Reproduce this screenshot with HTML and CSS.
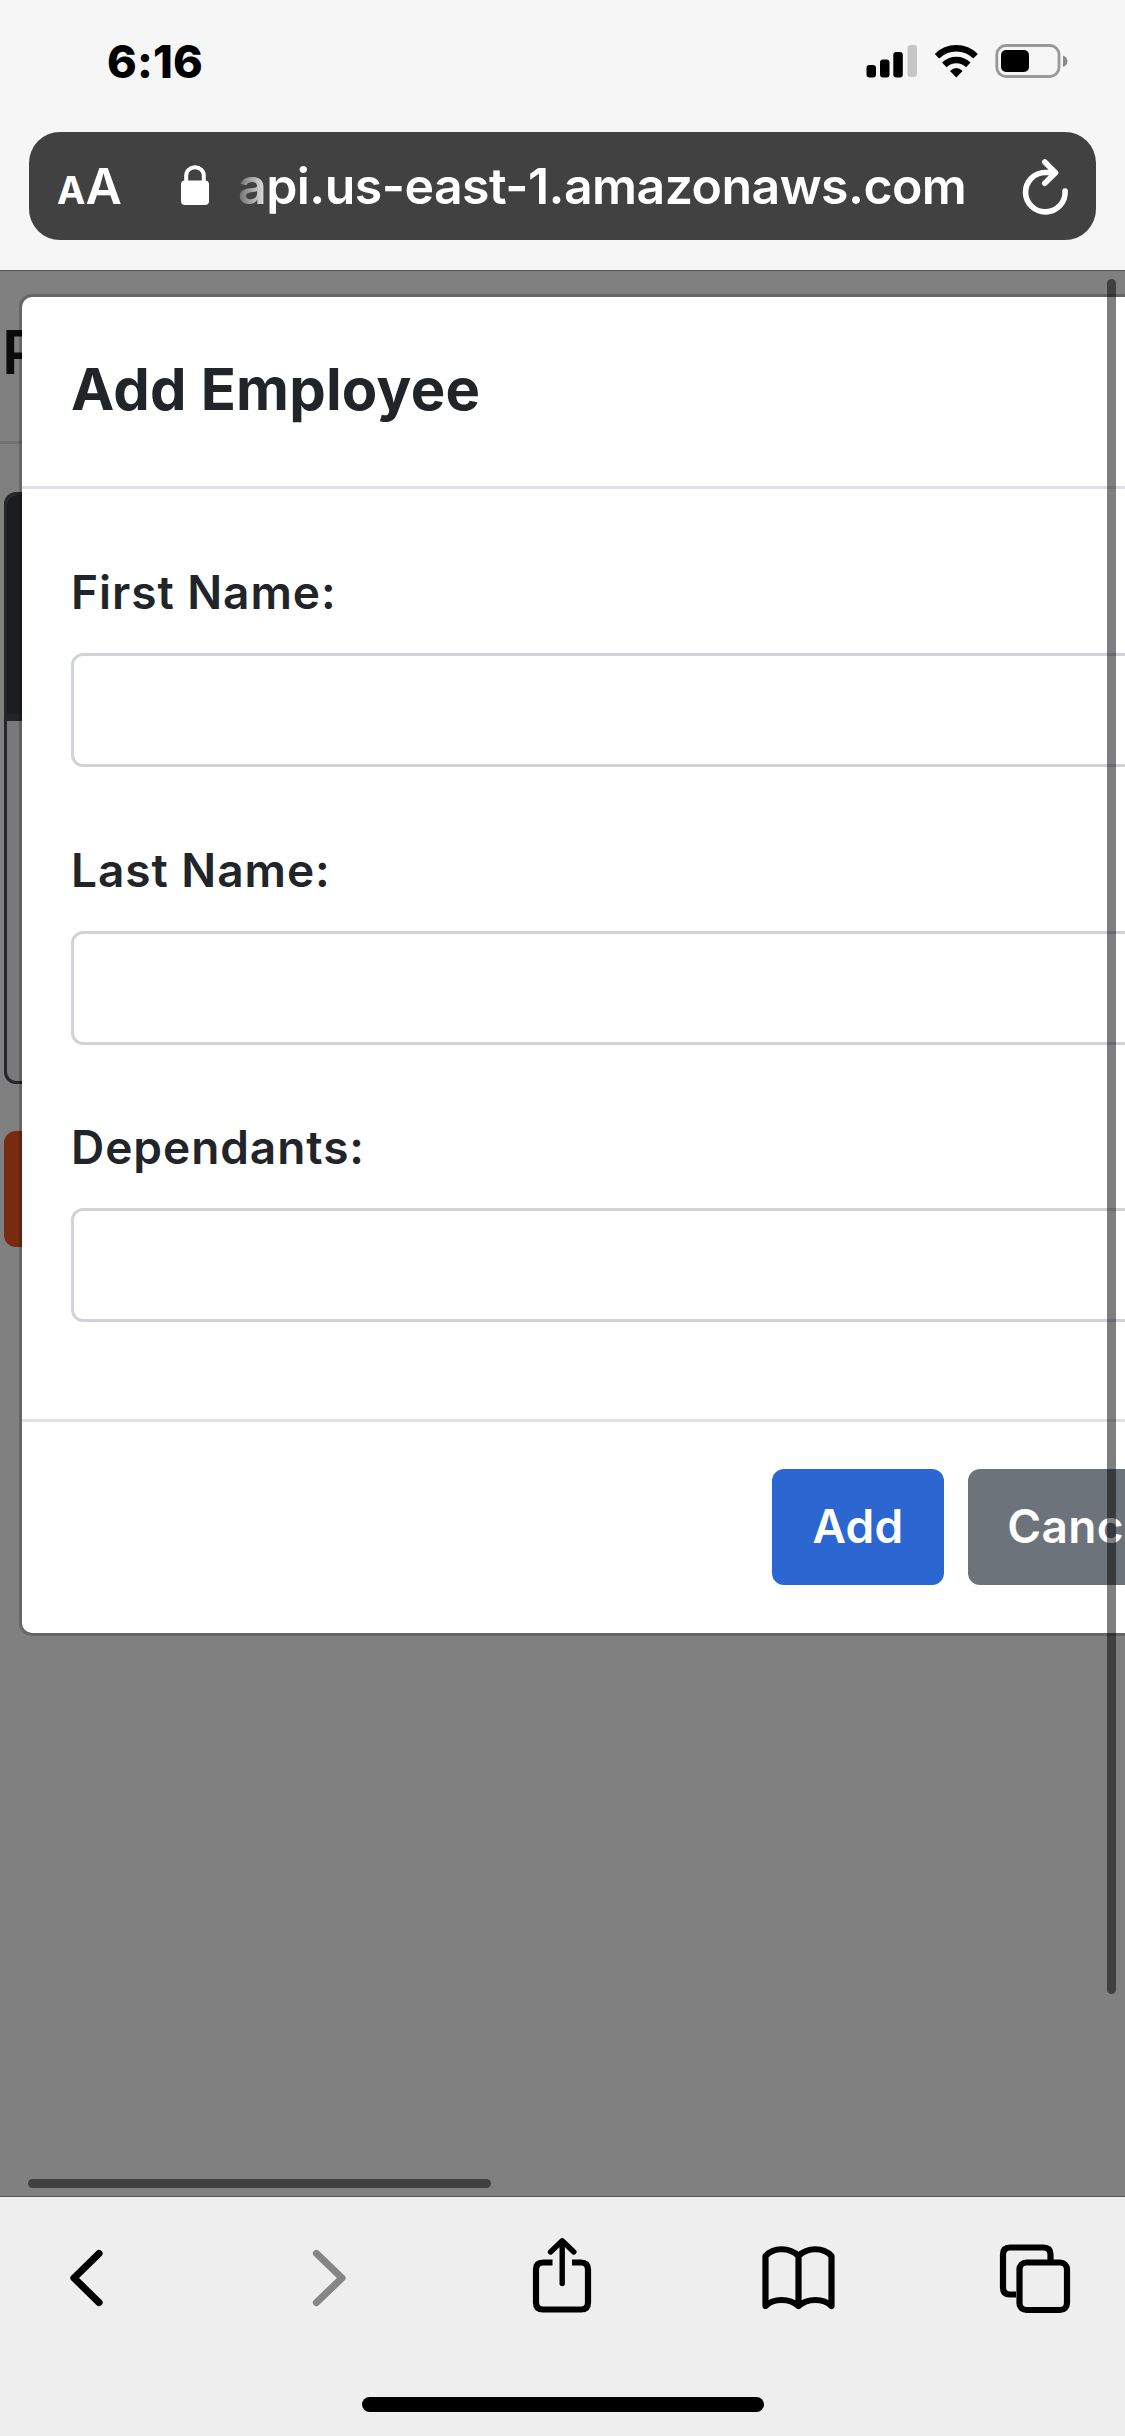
FILE: index.html
```html
<!DOCTYPE html>
<html lang="en">
<head>
<meta charset="utf-8">
<title>Add Employee</title>
<link rel="stylesheet" href="styles.css">
</head>
<body>
<div class="phone">
  <header class="browser-top">
    <div class="status">
      <span class="time">6:16</span>
      <svg class="status-icons" width="202" height="36" viewBox="866 43 202 36">
        <rect x="866.5" y="65" width="9.5" height="12.5" rx="3"/>
        <rect x="880" y="59.5" width="9.5" height="18" rx="3"/>
        <rect x="893.3" y="52" width="9.5" height="25.5" rx="3"/>
        <rect x="907.5" y="45" width="9.5" height="32" rx="3" fill="#c6c6c6"/>
        <g fill="none" stroke="#000" stroke-width="6.4">
          <path d="M937 56.2a27.5 27.5 0 0 1 38.6 0"/>
          <path d="M944.3 64.8a17.5 17.5 0 0 1 24 0"/>
        </g>
        <path d="M950 71q6.300-5.800 12.600 0l-6.300 6.400z"/>
        <rect x="996.800" y="45.500" width="62.200" height="31" rx="9" fill="none" stroke="#999" stroke-width="2.800"/>
        <rect x="1001" y="50" width="28" height="22" rx="5"/>
        <path d="M1063 55.500q4.400 1.500 4.400 5.700t-4.400 5.700z" fill="#8a8a8a"/>
      </svg>
    </div>
    <div class="address">
      <span class="text-size"><span class="small-a">A</span><span class="large-a">A</span></span>
      <svg class="lock" width="28" height="40" viewBox="0 0 28 40"><rect y="15.500" width="28" height="24.500" rx="4" fill="#fff"/><path d="M5.200 17v-6.500a8.800 8.300 0 0 1 17.600 0V17" fill="none" stroke="#fff" stroke-width="4"/></svg>
      <span class="url">api.us-east-1.amazonaws.com</span>
      <svg class="reload" width="48" height="58" viewBox="1021 158 48 58" fill="none" stroke="#fff" stroke-width="5.600" stroke-linecap="round" stroke-linejoin="round"><path d="M1055 172.500h-9.700a19.800 19.700 0 1 0 19.800 18.500M1044.800 162l10.700 10.700-10.700 10.600"/></svg>
    </div>
  </header>

  <main class="viewport">
    <div class="page">
      <div class="brand">P</div>
      <div class="card"><div class="card-head"></div></div>
      <div class="page-button"></div>
    </div>
    <section class="modal">
      <div class="modal-header"><h1>Add Employee</h1></div>
      <form class="modal-body">
        <label class="field">First Name:<input type="text"></label>
        <label class="field">Last Name:<input type="text"></label>
        <label class="field">Dependants:<input type="text"></label>
      </form>
      <div class="modal-footer">
        <button class="btn primary">Add</button>
        <button class="btn secondary">Cancel</button>
      </div>
    </section>
    <div class="scroll-y"></div>
    <div class="scroll-x"></div>
  </main>

  <footer class="toolbar">
    <svg width="1125" height="120" viewBox="0 2220 1125 120" fill="none" stroke="#000" stroke-width="6.200" stroke-linecap="round" stroke-linejoin="round">
      <path d="M99 2253.500L74 2278l25 24.500" stroke-width="7.200"/>
      <path d="M316.500 2253.500L342 2278l-25.500 24.500" stroke="#868686" stroke-width="7.200"/>
      <path d="M552.500 2262.500H543q-7 0-7 7v33q0 7 7 7h38q7 0 7-7v-33q0-7-7-7h-9" stroke-linecap="butt"/>
      <path d="M562.200 2283.500v-41.500M550.500 2252l11.700-11.200 11.700 11.200" stroke-width="5.400"/>
      <path d="M798.500 2256c-9-9-25-9-33 0v50c8-8 24-8 33 0c9-8 25-8 33 0v-50c-8-9-24-9-33 0v50"/>
      <path d="M1016 2294.500h-6q-7 0-7-7v-33q0-7 7-7h33.500q7 0 7 7v6" stroke-linecap="butt"/>
      <rect x="1019.500" y="2262.500" width="47.500" height="47.500" rx="7"/>
    </svg>
    <div class="home"></div>
  </footer>
</div>
</body>
</html>
```
FILE: styles.css
```css
* { box-sizing: border-box; }
body { margin: 0; font-family: Inter, "Liberation Sans", sans-serif; }
.phone { width: 1125px; height: 2436px; overflow: hidden; display: flex; flex-direction: column; }

.browser-top { height: 271px; background: #f6f6f6; border-bottom: 1px solid #555; padding: 0 29px; }
.status { height: 132px; padding: 43px 28px 0 78px; display: flex; justify-content: space-between; align-items: flex-start; }
.time { font-size: 45px; line-height: 37px; font-weight: 800; letter-spacing: .2px; }
.address { height: 108px; border-radius: 31px; background: #414141; color: #fff; display: flex; align-items: flex-start; }
.text-size { width: 152px; padding: 24px 0 0 28px; line-height: 60px; font-weight: 600; white-space: nowrap; }
.small-a { font-size: 38px; font-weight: 700; }
.large-a { font-size: 50px; }
.lock { margin-top: 33px; }
.url { width: 784px; margin-left: 19px; padding: 24px 0 0 10px; font-size: 50px; line-height: 60px; font-weight: 600; letter-spacing: -.55px; white-space: nowrap; -webkit-mask-image: linear-gradient(90deg, transparent 0, #000 44px); mask-image: linear-gradient(90deg, transparent 0, #000 44px); }
.reload { margin: 26px 0 0 9px; }

.viewport { height: 1926px; background: #808080; border-bottom: 1px solid #555; position: relative; overflow: hidden; }
.page { display: flex; flex-direction: column; }
.brand { height: 173px; padding: 51px 0 0 2px; border-bottom: 3px solid #707070; font-size: 60px; line-height: 60px; font-weight: 600; color: #0b0b0b; }
.card { width: 1100px; height: 592px; margin: 48px 0 0 4px; border: 3px solid #24262b; border-radius: 12px; background: #797979; }
.card-head { height: 226px; background: #1b1d20; border-bottom: 7px solid #212529; border-radius: 9px 9px 0 0; }
.page-button { width: 300px; height: 116px; margin: 47px 0 0 4px; border-radius: 12px; background: #772b10; }

/* The dialog overlays the dimmed page and runs past the right edge. */
.modal { position: absolute; left: 19px; top: 23px; width: 1216px; height: 1342px; background: #fff; background-clip: padding-box; border: 3px solid rgba(0,0,0,.2); border-radius: 13px; color: #212529; }
.modal-header { height: 192px; padding: 52px 49px 0; border-bottom: 3px solid #dee2e6; }
.modal-header h1 { margin: 0; font-size: 58px; line-height: 80px; font-weight: 700; letter-spacing: .2px; }
.modal-body { height: 933px; padding: 63px 48px 0 49px; border-bottom: 3px solid #dee2e6; }
.field { display: flex; flex-direction: column; height: 277.600px; font-size: 46px; line-height: 80px; font-weight: 600; letter-spacing: .95px; }
.field input { height: 114px; margin-top: 21px; border: 3px solid #d0d4da; border-radius: 12px; background: #fff; }
.modal-footer { display: flex; gap: 24px; padding: 47px 0 0 750px; }
.btn { height: 116px; border: 0; border-radius: 12px; padding: 0 0 3px; font: 600 46px/112px Inter, sans-serif; letter-spacing: .3px; color: #fff; }
.primary { width: 172px; background: #2b66d1; }
.secondary { width: 235px; background: #6c737b; }
.scroll-y { position: absolute; left: 1107px; top: 8px; width: 9px; height: 1715px; border-radius: 5px; background: rgba(0,0,0,.5); }
.scroll-x { position: absolute; left: 28px; top: 1908px; width: 463px; height: 9px; border-radius: 5px; background: rgba(0,0,0,.5); }

.toolbar { height: 239px; background: #eee; padding-top: 23px; display: flex; flex-direction: column; align-items: center; }
.home { width: 402px; height: 15px; margin-top: 57px; border-radius: 8px; background: #000; }
```
